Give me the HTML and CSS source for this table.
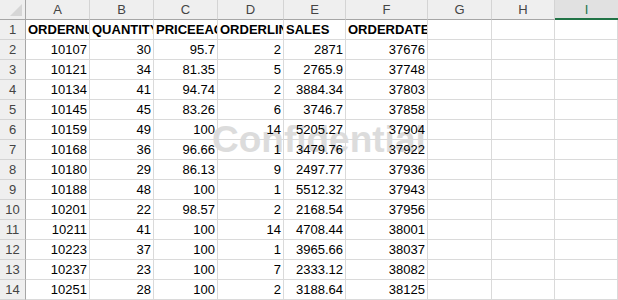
FILE: index.html
```html
<!DOCTYPE html>
<html>
<head>
<meta charset="utf-8">
<link rel="stylesheet" href="styles.css">
</head>
<body>
<div class="sheet">
  <div class="watermark">Confidential</div>
  <div class="grid">
    <div class="corner"><span class="tri"></span></div>
    <div class="ch">A</div><div class="ch">B</div><div class="ch">C</div><div class="ch">D</div><div class="ch">E</div><div class="ch">F</div><div class="ch">G</div><div class="ch">H</div><div class="ch sel">I</div>

    <div class="rh">1</div><div class="c b">ORDERNUMBER</div><div class="c b">QUANTITYORDERED</div><div class="c b">PRICEEACH</div><div class="c b">ORDERLINENUMBER</div><div class="c b">SALES</div><div class="c b">ORDERDATE</div><div class="c"></div><div class="c"></div><div class="c"></div>
    <div class="rh">2</div><div class="c n">10107</div><div class="c n">30</div><div class="c n">95.7</div><div class="c n">2</div><div class="c n">2871</div><div class="c n">37676</div><div class="c"></div><div class="c"></div><div class="c"></div>
    <div class="rh">3</div><div class="c n">10121</div><div class="c n">34</div><div class="c n">81.35</div><div class="c n">5</div><div class="c n">2765.9</div><div class="c n">37748</div><div class="c"></div><div class="c"></div><div class="c"></div>
    <div class="rh">4</div><div class="c n">10134</div><div class="c n">41</div><div class="c n">94.74</div><div class="c n">2</div><div class="c n">3884.34</div><div class="c n">37803</div><div class="c"></div><div class="c"></div><div class="c"></div>
    <div class="rh">5</div><div class="c n">10145</div><div class="c n">45</div><div class="c n">83.26</div><div class="c n">6</div><div class="c n">3746.7</div><div class="c n">37858</div><div class="c"></div><div class="c"></div><div class="c"></div>
    <div class="rh">6</div><div class="c n">10159</div><div class="c n">49</div><div class="c n">100</div><div class="c n">14</div><div class="c n">5205.27</div><div class="c n">37904</div><div class="c"></div><div class="c"></div><div class="c"></div>
    <div class="rh">7</div><div class="c n">10168</div><div class="c n">36</div><div class="c n">96.66</div><div class="c n">1</div><div class="c n">3479.76</div><div class="c n">37922</div><div class="c"></div><div class="c"></div><div class="c"></div>
    <div class="rh">8</div><div class="c n">10180</div><div class="c n">29</div><div class="c n">86.13</div><div class="c n">9</div><div class="c n">2497.77</div><div class="c n">37936</div><div class="c"></div><div class="c"></div><div class="c"></div>
    <div class="rh">9</div><div class="c n">10188</div><div class="c n">48</div><div class="c n">100</div><div class="c n">1</div><div class="c n">5512.32</div><div class="c n">37943</div><div class="c"></div><div class="c"></div><div class="c"></div>
    <div class="rh">10</div><div class="c n">10201</div><div class="c n">22</div><div class="c n">98.57</div><div class="c n">2</div><div class="c n">2168.54</div><div class="c n">37956</div><div class="c"></div><div class="c"></div><div class="c"></div>
    <div class="rh">11</div><div class="c n">10211</div><div class="c n">41</div><div class="c n">100</div><div class="c n">14</div><div class="c n">4708.44</div><div class="c n">38001</div><div class="c"></div><div class="c"></div><div class="c"></div>
    <div class="rh">12</div><div class="c n">10223</div><div class="c n">37</div><div class="c n">100</div><div class="c n">1</div><div class="c n">3965.66</div><div class="c n">38037</div><div class="c"></div><div class="c"></div><div class="c"></div>
    <div class="rh">13</div><div class="c n">10237</div><div class="c n">23</div><div class="c n">100</div><div class="c n">7</div><div class="c n">2333.12</div><div class="c n">38082</div><div class="c"></div><div class="c"></div><div class="c"></div>
    <div class="rh">14</div><div class="c n">10251</div><div class="c n">28</div><div class="c n">100</div><div class="c n">2</div><div class="c n">3188.64</div><div class="c n">38125</div><div class="c"></div><div class="c"></div><div class="c"></div>
  </div>
</div>
</body>
</html>
```
FILE: styles.css
```css
* { box-sizing: border-box; }
html, body { margin: 0; padding: 0; background: #fff; }
body { width: 618px; height: 300px; overflow: hidden; }
.sheet { position: relative; width: 618px; height: 300px; overflow: hidden; }
.grid {
  position: relative;
  z-index: 1;
  display: grid;
  grid-template-columns: 26px 64px 64px 64px 66px 62px 82px 64px 63px 1fr;
  grid-auto-rows: 20px;
  font-family: "Liberation Sans", Arial, sans-serif;
  font-size: 13px;
  color: #000;
}
.corner {
  position: relative;
  background: #efefef;
  border-right: 1px solid #a6a6a6;
  border-bottom: 1px solid #a6a6a6;
}
.tri {
  position: absolute;
  right: 3px;
  bottom: 3px;
  width: 0; height: 0;
  border-left: 12px solid transparent;
  border-bottom: 12px solid #d6d6d6;
}
.ch {
  background: #efefef;
  color: #444;
  text-align: center;
  line-height: 19px;
  border-right: 1px solid #d4d4d4;
  border-bottom: 1px solid #a6a6a6;
}
.ch.sel {
  background: #e1e1e1;
  color: #217346;
  border-bottom: 2px solid #217346;
  border-right: none;
}
.rh {
  background: #efefef;
  color: #444;
  text-align: center;
  line-height: 20px;
  border-right: 1px solid #a6a6a6;
  border-bottom: 1px solid #d4d4d4;
}
.c {
  border-right: 1px solid #dadada;
  border-bottom: 1px solid #dadada;
  line-height: 20px;
  padding: 0 2px;
  white-space: nowrap;
  overflow: hidden;
}
.c.b { font-weight: bold; text-overflow: clip; }
.c.n { text-align: right; }
.watermark {
  position: absolute;
  z-index: 0;
  left: 212px;
  top: 119px;
  font-family: "Liberation Sans", Arial, sans-serif;
  font-weight: bold;
  font-size: 37px;
  color: #dcdcdc;
  pointer-events: none;
  white-space: nowrap;
}
```
